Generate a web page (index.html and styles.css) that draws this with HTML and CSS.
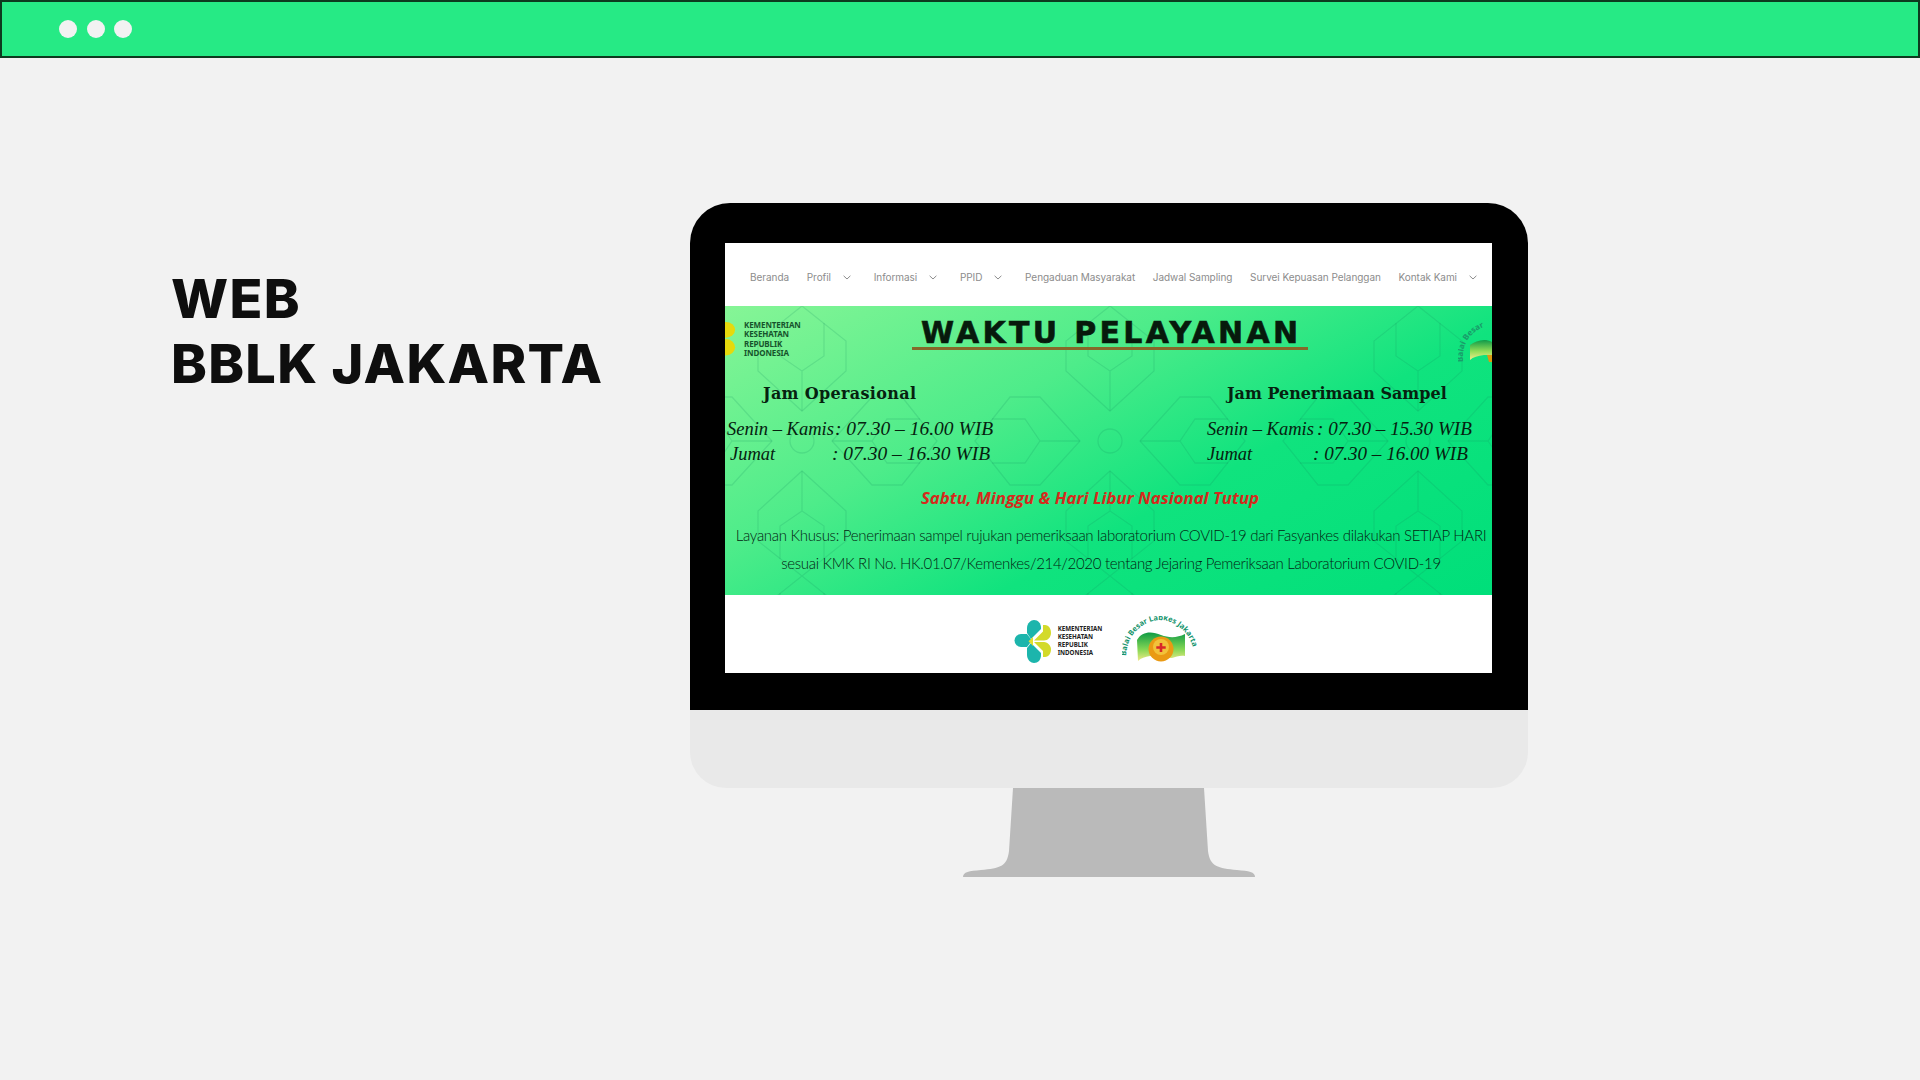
FILE: index.html
```html
<!DOCTYPE html>
<html lang="id">
<head>
<meta charset="utf-8">
<title>Web BBLK Jakarta</title>
<link rel="stylesheet" href="styles.css">
</head>
<body>
<header class="topbar">
  <span class="dot"></span><span class="dot"></span><span class="dot"></span>
</header>
<main class="slide">
  <h1 class="slide-title">WEB<br>BBLK JAKARTA</h1>
  <div class="monitor">
    <div class="bezel">
      <div class="screen">
        <nav class="site-nav">
          <a class="nav-item">Beranda</a>
          <a class="nav-item">Profil<svg class="chev" viewBox="0 0 8 5"><path d="M.6.8 4 4 7.4.8"/></svg></a>
          <a class="nav-item">Informasi<svg class="chev" viewBox="0 0 8 5"><path d="M.6.8 4 4 7.4.8"/></svg></a>
          <a class="nav-item">PPID<svg class="chev" viewBox="0 0 8 5"><path d="M.6.8 4 4 7.4.8"/></svg></a>
          <a class="nav-item">Pengaduan Masyarakat</a>
          <a class="nav-item">Jadwal Sampling</a>
          <a class="nav-item">Survei Kepuasan Pelanggan</a>
          <a class="nav-item">Kontak Kami<svg class="chev" viewBox="0 0 8 5"><path d="M.6.8 4 4 7.4.8"/></svg></a>
        </nav>
        <section class="banner">
          <svg class="banner-pattern" width="767" height="289" viewBox="0 0 767 289">
            <defs>
              <g id="lobe" fill="none" stroke="#0a8a58" stroke-opacity=".17" stroke-width="1.300">
                <path d="M0-135 44-100V-70L0-30-44-70V-100Z"/>
                <path d="M0-30V-70L-22-85V-118M0-70 22-85V-118"/>
              </g>
              <pattern id="lattice" width="308" height="270" patternUnits="userSpaceOnUse" x="231" y="0">
                <g transform="translate(154 135)">
                  <use href="#lobe"/>
                  <use href="#lobe" transform="rotate(90)"/>
                  <use href="#lobe" transform="rotate(180)"/>
                  <use href="#lobe" transform="rotate(270)"/>
                  <circle r="12" fill="none" stroke="#0a8a58" stroke-opacity=".17" stroke-width="1.300"/>
                </g>
              </pattern>
            </defs>
            <rect width="767" height="289" fill="url(#lattice)"/>
          </svg>

          <div class="gov-mark">
            <svg class="gov-petals" viewBox="0 0 12 38"><ellipse cx="1" cy="9" rx="10" ry="8.500"/><ellipse cx="1" cy="28" rx="10" ry="9"/></svg>
            <p class="gov-name">KEMENTERIAN<br>KESEHATAN<br>REPUBLIK<br>INDONESIA</p>
          </div>

          <svg class="lab-mark" viewBox="0 0 34 48">
            <defs>
              <linearGradient id="labFlagSmall" x1="0" y1="0" x2="0" y2="1"><stop offset="0" stop-color="#119a4a"/><stop offset=".55" stop-color="#8fdc57"/><stop offset="1" stop-color="#f4ec8c"/></linearGradient>
              <path id="labArcSmall" d="M5 44C3 22 16 8 42 5"/>
            </defs>
            <path d="M12 27C18 23 26 20 34 24V37H26C20 38 15 39 12 42Z" fill="url(#labFlagSmall)"/>
            <path d="M29 37H34V44H31Z" fill="#d99a12"/>
            <text class="lab-arc-small"><textPath href="#labArcSmall">Balai Besar</textPath></text>
          </svg>

          <div class="banner-head">
            <h2 class="banner-title">WAKTU PELAYANAN</h2>
          </div>

          <div class="hours">
            <div class="hours-col hours-col-left">
              <h3 class="hours-title">Jam Operasional</h3>
              <p class="hours-row"><span class="lbl lbl-a">Senin – Kamis</span><span>: 07.30 – 16.00 WIB</span></p>
              <p class="hours-row hours-row-in"><span class="lbl lbl-b">Jumat</span><span>: 07.30 – 16.30 WIB</span></p>
            </div>
            <div class="hours-col hours-col-right">
              <h3 class="hours-title">Jam Penerimaan Sampel</h3>
              <p class="hours-row"><span class="lbl lbl-d">Senin – Kamis</span><span>: 07.30 – 15.30 WIB</span></p>
              <p class="hours-row"><span class="lbl lbl-c">Jumat</span><span>: 07.30 – 16.00 WIB</span></p>
            </div>
          </div>

          <p class="closed">Sabtu, Minggu &amp; Hari Libur Nasional Tutup</p>
          <p class="special">Layanan Khusus: Penerimaan sampel rujukan pemeriksaan laboratorium COVID-19 dari Fasyankes dilakukan SETIAP HARI</p>
          <p class="special special-second">sesuai KMK RI No. HK.01.07/Kemenkes/214/2020 tentang Jejaring Pemeriksaan Laboratorium COVID-19</p>
        </section>
        <footer class="site-footer">
          <div class="kemenkes">
            <svg class="kemenkes-icon" viewBox="0 0 38 43">
              <path d="M13 14H7A6.500 6.500 0 0 0 7 27H13L18 20.500Z" fill="#1cb5ac"/>
              <path d="M13 13V8C13 3 17 0 20 0 24 0 27 3 27 8V9L17 19Z" fill="#1cb5ac"/>
              <path d="M13 28V35C13 40 17 43 20 43 24 43 27 40 27 35V33L17 23Z" fill="#1cb5ac"/>
              <path d="M20 20.500 29 11.500V5H31C35 5 37 9 37 13 37 17 34 20.500 30 20.500Z" fill="#d3da2a"/>
              <path d="M20 22H30C34 22 37 26 37 29 37 33 35 37 31 37H29V31Z" fill="#d3da2a"/>
              <path d="M14.500 21.300 19 17V26Z" fill="#e3e02e"/>
            </svg>
            <p class="kemenkes-name">KEMENTERIAN<br>KESEHATAN<br>REPUBLIK<br>INDONESIA</p>
          </div>
          <svg class="lab-logo" viewBox="0 0 76 48">
            <defs>
              <linearGradient id="labFlag" x1="0" y1="0" x2="0" y2="1"><stop offset="0" stop-color="#0f9b45"/><stop offset=".6" stop-color="#86d755"/><stop offset="1" stop-color="#f0ea86"/></linearGradient>
              <path id="labArc" d="M4 40C5 16 24 4 38 4 52 4 71 16 72 40"/>
            </defs>
            <text class="lab-arc" textLength="100"><textPath href="#labArc">Balai Besar Labkes Jakarta</textPath></text>
            <path d="M15 24C20 15 30 15 39 19 47 22 55 22 63 18V40C58 39 54 41 50 42 42 42 34 40 28 40 23 41 19 42 16 45Z" fill="url(#labFlag)"/>
            <circle cx="39" cy="33" r="12.500" fill="#ea9a14"/>
            <circle cx="39" cy="31" r="8" fill="#f2c23a"/>
            <path d="M37.700 27h2.600v3.300h3.400v2.400h-3.400V36h-2.600v-3.300h-3.400v-2.400h3.400Z" fill="#d92828"/>
          </svg>
        </footer>
      </div>
    </div>
    <div class="chin"></div>
    <svg class="stand" viewBox="0 0 292 89">
      <path d="M50 0H241L245 63C247 79 255 80 274 82 286 83 292 84 292 89H0C0 84 6 83 18 82 37 80 44 79 46 63Z"/>
    </svg>
  </div>
</main>
</body>
</html>
```
FILE: styles.css
```css
* { box-sizing: border-box; }
html, body { margin: 0; padding: 0; }
body {
  width: 1920px;
  height: 1080px;
  overflow: hidden;
  background: #f2f2f2;
  font-family: "Noto Sans", sans-serif;
}
p, h1, h2, h3 { margin: 0; }

.topbar {
  height: 58px;
  display: flex;
  align-items: center;
  gap: 9.5px;
  padding-left: 57px;
  background: #26ea85;
  border: 2px solid #0d3a1f;
}
.dot { width: 18px; height: 18px; border-radius: 50%; background: #f2f2f2; }

.slide { display: flex; align-items: flex-start; padding-left: 171px; }
.slide-title {
  width: 519px;
  padding-top: 208px;
  font-family: Inter, sans-serif;
  font-size: 54px;
  font-weight: 800;
  line-height: 65px;
  letter-spacing: 1.3px;
  color: #0e0e0e;
}

.monitor { width: 838px; margin-top: 145px; display: flex; flex-direction: column; align-items: center; }
.bezel { width: 100%; height: 507px; padding: 40px 36px 37px 35px; background: #000; border-radius: 40px 40px 0 0; }
.screen { height: 100%; background: #fff; display: flex; flex-direction: column; }
.chin { width: 100%; height: 78px; background: #e9e9e9; border-radius: 0 0 36px 36px; }
.stand { display: block; width: 292px; height: 89px; fill: #bababa; }

.site-nav { height: 63px; display: flex; align-items: center; gap: 17.7px; padding: 5px 0 0 25px; }
.nav-item {
  display: flex;
  align-items: center;
  gap: 12px;
  font-family: Inter, sans-serif;
  font-size: 10px;
  letter-spacing: -.05px;
  color: #8c8c8c;
  white-space: nowrap;
}
.chev { width: 8px; height: 5px; margin-right: 5px; fill: none; stroke: #8c8c8c; stroke-width: 1; }

.banner {
  position: relative;
  height: 289px;
  overflow: hidden;
  background: linear-gradient(152deg, #86f596 0%, #4eec8a 35%, #10e37e 62%, #00df7a 100%);
}
.banner > * { position: relative; }
.banner .banner-pattern { position: absolute; inset: 0; }

.gov-mark { position: absolute !important; left: 0; top: 14px; display: flex; gap: 8px; }
.gov-petals { width: 11px; height: 38px; fill: #e6d90c; }
.gov-name { font-size: 8px; font-weight: 700; line-height: 9.3px; color: #16532c; letter-spacing: -.1px; }
.lab-mark { position: absolute !important; right: 0; top: 12px; width: 34px; height: 48px; }
.lab-arc-small { font-family: "Noto Sans", sans-serif; font-size: 8px; font-weight: 700; fill: #1a9a6a; }

.banner-head { display: flex; justify-content: center; padding: 13px 0 0 3px; }
.banner-title {
  width: 396px;
  padding-left: 9px;
  font-family: "DejaVu Sans", sans-serif;
  font-size: 30px;
  font-weight: 700;
  line-height: 28px;
  letter-spacing: 3.3px;
  white-space: nowrap;
  color: #071a0c;
  -webkit-text-stroke: .6px #071a0c;
  border-bottom: 3px solid #85692a;
}
.hours { display: grid; grid-template-columns: 480px 1fr; padding: 32px 0 0 2px; }
.hours-title { font-family: "DejaVu Serif", serif; font-size: 16px; font-weight: 700; line-height: 24px; color: #06210f; }
.hours-col-left .hours-title { margin-left: 36px; letter-spacing: .33px; }
.hours-col-right .hours-title { margin-left: 20px; }
.hours-row {
  display: flex;
  margin-top: 1px;
  font-family: "Liberation Serif", serif;
  font-style: italic;
  font-size: 19.500px;
  line-height: 24px;
  color: #06210f;
  white-space: nowrap;
}
.hours-col-right .hours-row { font-size: 19.100px; }
.hours-title + .hours-row { margin-top: 11px; }
.hours-row-in { margin-left: 3px; }
.hours-row .lbl { font-size: 18.500px; }
.lbl-a { width: 108px; }
.lbl-b { width: 102px; }
.lbl-c { width: 106px; }
.lbl-d { width: 110px; }

.closed {
  margin-top: 21px;
  padding-right: 37px;
  text-align: center;
  font-family: "Open Sans", sans-serif;
  font-size: 16.800px;
  font-style: italic;
  font-weight: 700;
  line-height: 22px;
  color: #d52a1c;
}
.special {
  margin-top: 15px;
  padding-left: 5px;
  text-align: center;
  font-family: Lato, sans-serif;
  font-weight: 300;
  font-size: 15px;
  letter-spacing: -.3px;
  line-height: 22px;
  color: #032412;
  white-space: nowrap;
}
.special-second { margin-top: 6px; }

.site-footer { flex: 1; display: flex; align-items: center; justify-content: center; gap: 20px; padding: 14px 5px 0 0; }
.kemenkes { display: flex; align-items: center; gap: 6px; }
.kemenkes-icon { width: 38px; height: 43px; }
.kemenkes-name { font-size: 6.200px; font-weight: 700; line-height: 8px; color: #222; white-space: nowrap; }
.lab-logo { width: 76px; height: 48px; margin-top: -2px; }
.lab-arc { font-family: "Noto Sans", sans-serif; font-size: 7.500px; font-weight: 700; fill: #13936b; }
```
